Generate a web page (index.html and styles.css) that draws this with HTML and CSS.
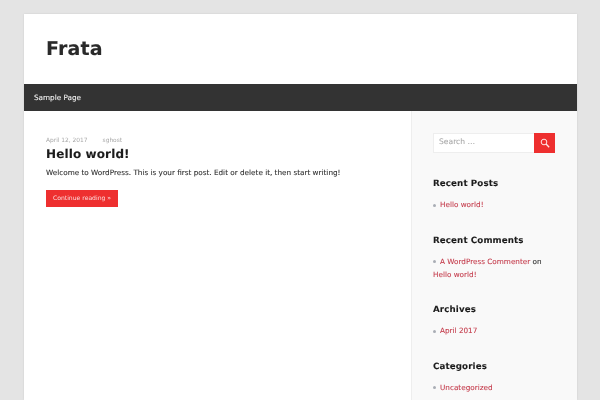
FILE: index.html
```html
<!DOCTYPE html>
<html lang="en">
<head>
<meta charset="utf-8">
<title>Frata</title>
<link rel="stylesheet" href="styles.css">
</head>
<body>
<div class="wrap">
  <header class="site-header"><h1 class="site-title">Frata</h1></header>
  <nav class="main-nav"><a href="#">Sample Page</a></nav>
  <div class="content">
    <main class="posts">
      <div class="meta"><span>April 12, 2017</span><span>sghost</span></div>
      <h2 class="post-title">Hello world!</h2>
      <p class="excerpt">Welcome to WordPress. This is your first post. Edit or delete it, then start writing!</p>
      <a class="more" href="#">Continue reading »</a>
    </main>
    <aside class="sidebar">
      <form class="search">
        <div class="search-field">Search …</div>
        <div class="search-btn">
          <svg width="10" height="10" viewBox="0 0 12 12" fill="none" stroke="#ffe6e6"><circle cx="4.8" cy="4.8" r="3.4" stroke-width="1.2"/><path d="M7.3 7.3 11 11" stroke-width="1.6"/></svg>
        </div>
      </form>
      <section class="widget">
        <h3>Recent Posts</h3>
        <ul><li><a href="#">Hello world!</a></li></ul>
      </section>
      <section class="widget">
        <h3>Recent Comments</h3>
        <ul><li><a href="#">A WordPress Commenter</a> on <a href="#">Hello world!</a></li></ul>
      </section>
      <section class="widget">
        <h3>Archives</h3>
        <ul><li><a href="#">April 2017</a></li></ul>
      </section>
      <section class="widget">
        <h3>Categories</h3>
        <ul><li><a href="#">Uncategorized</a></li></ul>
      </section>
    </aside>
  </div>
</div>
</body>
</html>
```
FILE: styles.css
```css
html, body { margin: 0; padding: 0; height: 400px; overflow: hidden; }
body { background: #e4e4e4; font-family: "DejaVu Sans", sans-serif; font-size: 7.25px; color: #2c2c2c; text-rendering: geometricPrecision; -webkit-font-smoothing: antialiased; -webkit-text-stroke: .08px; }
a { text-decoration: none; color: #c43a4a; }
.wrap { width: 553px; margin: 14px 0 0 24px; background: #fff; box-shadow: 0 0 2px rgba(0,0,0,.1); filter: blur(.2px); }
.site-header { height: 69px; padding: 1px 0 0 22px; display: flex; align-items: center; }
.site-title { margin: 0; font-size: 19px; font-weight: 700; letter-spacing: .2px; color: #2a2a2a; line-height: 1; }
.main-nav { height: 27px; background: #333; display: flex; align-items: center; padding-left: 10px; }
.main-nav a { color: #f4f4f4; }
.content { display: flex; height: 289px; }
.posts { width: 343px; padding: 26px 22px 0; }
.meta { display: flex; gap: 15px; color: #a8a8a8; font-size: 5.9px; line-height: 9px; -webkit-text-stroke: 0; }
.post-title { margin: 0; font-size: 12px; font-weight: 700; line-height: 17px; color: #1c1c1c; letter-spacing: .12px; }
.excerpt { margin: 3px 0 0; line-height: 14px; }
.more { display: inline-block; margin-top: 10px; width: 72px; height: 17px; line-height: 17px; text-align: center; background: #ee2f2f; color: #fbdcdc; font-size: 6.1px; -webkit-text-stroke: 0; }
.sidebar { flex: 1; background: #f9f9f9; border-left: 1px solid #eee; padding: 22px 22px 0 21px; min-width: 0; }
.search { display: flex; height: 20px; }
.search-field { flex: 1; background: #fff; border: 1px solid #eee; border-right: 0; padding-left: 5px; line-height: 16px; font-size: 7.6px; color: #aaa; }
.search-btn { width: 21px; background: #ee2f2f; display: flex; align-items: center; justify-content: center; }
.widget { margin-top: 24px; }
.widget h3 { margin: 0 0 7px; font-size: 8.7px; line-height: 14px; font-weight: 700; color: #1c1c1c; letter-spacing: .12px; }
.widget + .widget { margin-top: 22.6px; }
.widget ul { margin: 0; padding: 0; list-style: none; }
.widget li { line-height: 13px; }
.widget li::before { content: ""; display: inline-block; width: 3px; height: 3px; border-radius: 50%; background: #a9adb5; margin-right: 4px; vertical-align: .5px; }
```
